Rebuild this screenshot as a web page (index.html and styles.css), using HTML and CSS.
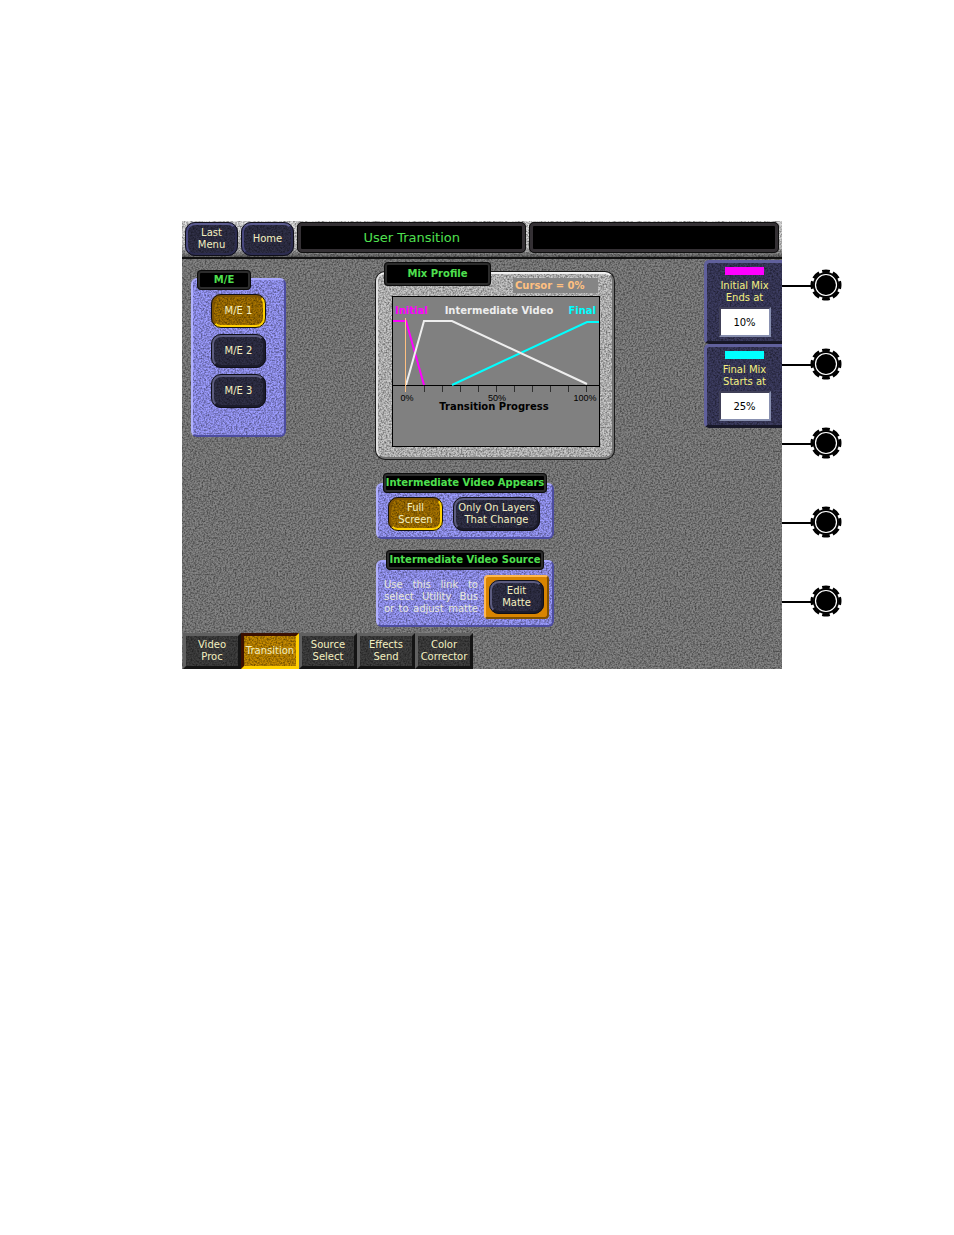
FILE: index.html
```
<!DOCTYPE html>
<html lang="en">
  <head>
    <meta charset="UTF-8" />
    <meta name="viewport" content="width=device-width, initial-scale=1.0" />
    <title>User Transition</title>
    <link rel="stylesheet" href="styles.css">
  </head>
  <body>
    <svg class="defs" aria-hidden="true">
      <symbol id="knob" viewBox="0 0 32 32">
        <circle cx="16" cy="16" r="13" />
        <circle cx="16" cy="16" r="14" fill="none" stroke="#000" stroke-width="3" pathLength="80" stroke-dasharray="7 3" stroke-dashoffset="3.5" />
        <circle cx="16" cy="16" r="10.5" fill="none" stroke="#fff" stroke-width="1.2" />
      </symbol>
    </svg>
    <main>
      <div class="console">
        <header>
          <button class="key">Last<br />Menu</button>
          <button class="key">Home</button>
          <h1 class="display">User Transition</h1>
          <div class="display message"></div>
        </header>

        <div class="work">
          <section class="panel me">
            <h2>M/E</h2>
            <div class="stack">
              <button class="key lit">M/E 1</button>
              <button class="key">M/E 2</button>
              <button class="key">M/E 3</button>
            </div>
          </section>

          <div class="center">
            <section class="panel profile">
              <div class="profileTop">
                <h2>Mix Profile</h2>
                <output>Cursor = 0%</output>
              </div>
              <svg class="chart" viewBox="0 0 208 151">
                <rect class="frame" x="0.5" y="0.5" width="207" height="150" />
                <text class="name initial" x="3" y="18">Initial</text>
                <text class="name middle" x="107" y="18" text-anchor="middle">Intermediate Video</text>
                <text class="name final" x="204" y="18" text-anchor="end">Final</text>
                <path class="axis" d="M0 89.5H208" />
                <path class="axis ticks" d="M32.5 90v6M50.5 90v6M68.5 90v6M86.5 90v6M104.5 90v6M122.5 90v6M140.5 90v6M158.5 90v6M176.5 90v6M194.5 90v6" />
                <polyline class="line initial" points="1,25 14,25 32,89" />
                <polyline class="line final" points="60,89 195,26 207,26" />
                <polyline class="line middle" points="14,89 32,25 60,25 195,88" />
                <path class="cursor" d="M13.5 22V96" />
                <text class="tick" x="15" y="105">0%</text>
                <text class="tick" x="105" y="105">50%</text>
                <text class="tick" x="193" y="105">100%</text>
                <text class="name" x="102" y="114" text-anchor="middle">Transition Progress</text>
              </svg>
            </section>

            <section class="panel appears">
              <h2>Intermediate Video Appears</h2>
              <div class="row">
                <button class="key lit">Full<br />Screen</button>
                <button class="key wide">Only On Layers<br />That Change</button>
              </div>
            </section>

            <section class="panel source">
              <h2>Intermediate Video Source</h2>
              <div class="row">
                <p>Use this link to<br />select Utility Bus<br />or to adjust matte</p>
                <div class="link">
                  <button class="key">Edit<br />Matte</button>
                </div>
              </div>
            </section>
          </div>

          <form class="values">
            <div class="value">
              <span class="swatch initial"></span>
              <label for="initialMix">Initial Mix<br />Ends at</label>
              <input id="initialMix" type="text" value="10%" />
            </div>
            <div class="value">
              <span class="swatch final"></span>
              <label for="finalMix">Final Mix<br />Starts at</label>
              <input id="finalMix" type="text" value="25%" />
            </div>
          </form>
        </div>

        <nav>
          <a href="#">Video<br />Proc</a>
          <a href="#" class="active">Transition</a>
          <a href="#">Source<br />Select</a>
          <a href="#">Effects<br />Send</a>
          <a href="#">Color<br />Corrector</a>
        </nav>
      </div>

      <ul class="knobs">
        <li><svg><use href="#knob" /></svg></li>
        <li><svg><use href="#knob" /></svg></li>
        <li><svg><use href="#knob" /></svg></li>
        <li><svg><use href="#knob" /></svg></li>
        <li><svg><use href="#knob" /></svg></li>
      </ul>
    </main>
  </body>
</html>
```
FILE: styles.css
```
:root {
  --green: #4fe04f;
  --cream: #f4f0c0;
  --magenta: #ff00ff;
  --cyan: #00ffff;
  --navy: #303048;
  --gold: #a87400;
  --grain: url("data:image/svg+xml,%3Csvg xmlns='http://www.w3.org/2000/svg' width='200' height='200'%3E%3Cfilter id='n'%3E%3CfeTurbulence type='fractalNoise' baseFrequency='.6' numOctaves='2' stitchTiles='stitch'/%3E%3CfeColorMatrix values='0 0 0 0 0 0 0 0 0 0 0 0 0 0 0 1 0 0 0 -.35'/%3E%3C/filter%3E%3Crect width='200' height='200' filter='url(%23n)'/%3E%3C/svg%3E");
}
* {
  margin: 0;
  padding: 0;
  box-sizing: border-box;
  font-family: "DejaVu Sans", Verdana, sans-serif;
}
body {
  background-color: #ffffff;
}
.defs {
  display: none;
}
main {
  display: flex;
  padding: 221px 112px 40px 182px;
}
.console {
  flex: 1;
  display: flex;
  flex-direction: column;
  background: var(--grain), #848484;
}

header {
  display: flex;
  gap: 3px;
  height: 38px;
  padding: 1px 3px 4px;
  border-bottom: 2px solid #111111;
  background: var(--grain), linear-gradient(#e8e8e8, #c8c8c8 75%, #606060);
}
.display {
  flex: 230 1 0;
  border: 4px solid #343034;
  border-radius: 5px;
  outline: 1px solid #101010;
  outline-offset: -1px;
  background-color: #000000;
  color: var(--green);
  font-size: 13px;
  font-weight: normal;
  line-height: 24px;
  text-align: center;
}
.message {
  flex-grow: 251;
}

.key {
  cursor: pointer;
  width: 55px;
  height: 34px;
  border: 3px solid;
  border-color: #5c5c80 #1c1c2c #1c1c2c #5c5c80;
  border-radius: 10px;
  outline: 1px solid #101018;
  outline-offset: -1px;
  background: var(--grain), var(--navy);
  color: var(--cream);
  font-size: 10px;
  line-height: 12px;
  white-space: nowrap;
}
header .key {
  width: 53px;
  border-color: #5c5c90 #2c2c50 #2c2c50 #484880;
}
.key.lit {
  border-color: #805400 #ffd000 #ffd000 #805400;
  background: var(--grain), var(--gold);
}
.key.wide {
  width: 87px;
}

.work {
  flex: 1;
  display: flex;
  justify-content: space-between;
  align-items: flex-start;
  padding: 1px 0 6px 9px;
}
.panel {
  border: 2px solid;
  border-color: #a8a8ff #4c4ca0 #4c4ca0 #b0b0ff;
  border-radius: 6px;
  background: var(--grain), #9c9cff;
}
.panel h2 {
  width: max-content;
  border: 3px solid #2c2c2c;
  border-radius: 4px;
  outline: 1px solid #0c0c0c;
  outline-offset: -1px;
  background-color: #000000;
  color: var(--green);
  font-size: 10px;
  line-height: 14px;
  text-align: center;
}
.me {
  width: 95px;
  height: 159px;
  margin-top: 18px;
}
.panel.me h2 {
  width: 54px;
  margin: -10px 0 0 4px;
}
.stack {
  display: flex;
  flex-direction: column;
  align-items: center;
  gap: 6px;
  padding-top: 4px;
}

.center {
  width: 238px;
}
.profile {
  height: 187px;
  margin-top: 12px;
  border-color: #f0f0f0 #707070 #707070 #e0e0e0;
  border-radius: 9px;
  box-shadow: 0 0 0 1px #181818;
  background: var(--grain), #c8c8c8;
}
.profileTop {
  display: flex;
  justify-content: space-between;
  align-items: flex-end;
  margin: -12px 14px 3px 6px;
  height: 31px;
}
.panel.profile h2 {
  width: 107px;
  align-self: flex-start;
  line-height: 18px;
}
.profileTop output {
  width: 85px;
  padding-left: 2px;
  background-color: #858585;
  color: #ffc080;
  font-size: 10px;
  font-weight: bold;
  line-height: 15px;
  white-space: nowrap;
}
.chart {
  display: block;
  width: 208px;
  margin-left: 14px;
}
.frame {
  fill: #808080;
  stroke: #000000;
}
.chart .name {
  font-size: 10px;
  font-weight: bold;
}
.chart .tick {
  font-family: "Liberation Sans", Arial, sans-serif;
  font-size: 9px;
  text-anchor: middle;
}
.axis {
  stroke: #000000;
}
.ticks {
  stroke: #303030;
}
.line {
  fill: none;
  stroke-width: 2;
}
.line.initial {
  stroke: var(--magenta);
}
.line.middle {
  stroke: #eeeeee;
}
.line.final {
  stroke: var(--cyan);
}
.name.initial {
  fill: var(--magenta);
}
.name.middle {
  fill: #eeeeee;
}
.name.final {
  fill: var(--cyan);
}
.cursor {
  stroke: #ffc080;
}

.appears,
.source {
  width: 178px;
}
.panel.appears h2,
.panel.source h2 {
  margin: -12px auto 0;
}
.appears {
  height: 56px;
  margin-top: 24px;
}
.source {
  height: 67px;
  margin-top: 21px;
}
.row {
  display: flex;
  gap: 10px;
  padding: 4px 10px 0;
}
.source .row {
  justify-content: space-between;
  gap: 6px;
  padding: 5px 3px 0 6px;
}
.source p {
  flex: 1;
  padding-top: 4px;
  color: #e8e8d8;
  font-size: 10px;
  line-height: 12px;
  white-space: nowrap;
  text-align: justify;
  text-align-last: justify;
}
.link {
  display: flex;
  padding: 3px;
  border: 2px solid;
  border-color: #ffb850 #805000 #805000 #ffb850;
  border-radius: 4px;
  background-color: #d88400;
}

.value {
  display: flex;
  flex-direction: column;
  align-items: center;
  width: 78px;
  height: 84px;
  padding-top: 4px;
  border: 3px solid;
  border-color: #60609c #60609c #181828 #60609c;
  border-right: none;
  border-radius: 5px 0 0 5px;
  background: var(--grain), #3c3c60;
}
.swatch {
  width: 39px;
  height: 8px;
}
.swatch.initial {
  background-color: var(--magenta);
}
.swatch.final {
  background-color: var(--cyan);
}
.value label {
  margin: 5px 0 3px;
  color: #f4f080;
  font-size: 10px;
  line-height: 12px;
  text-align: center;
}
.value input {
  width: 52px;
  height: 30px;
  border: 2px solid;
  border-color: #404058 #8890b0 #8890b0 #404058;
  background-color: #ffffff;
  color: #000000;
  font-size: 10px;
  text-align: center;
}

nav {
  display: flex;
  padding-left: 1px;
}
nav a {
  display: flex;
  justify-content: center;
  align-items: center;
  width: 58px;
  height: 36px;
  border: 3px solid;
  border-color: #606060 #141414 #141414 #606060;
  background: var(--grain), #404040;
  color: var(--cream);
  font-size: 10px;
  line-height: 12px;
  text-align: center;
  text-decoration: none;
  white-space: nowrap;
}
nav .active {
  border-color: #3c1000 #ffd000 #ffd000 #3c1000;
  background: var(--grain), #c88c00;
}

.knobs {
  width: 60px;
  list-style: none;
  padding-top: 24px;
}
.knobs li {
  display: flex;
  justify-content: flex-end;
  height: 79px;
  padding-top: 24px;
  background: linear-gradient(#000000, #000000) 0 40px / 32px 2px no-repeat;
}
.knobs svg {
  width: 32px;
  height: 32px;
}
```
